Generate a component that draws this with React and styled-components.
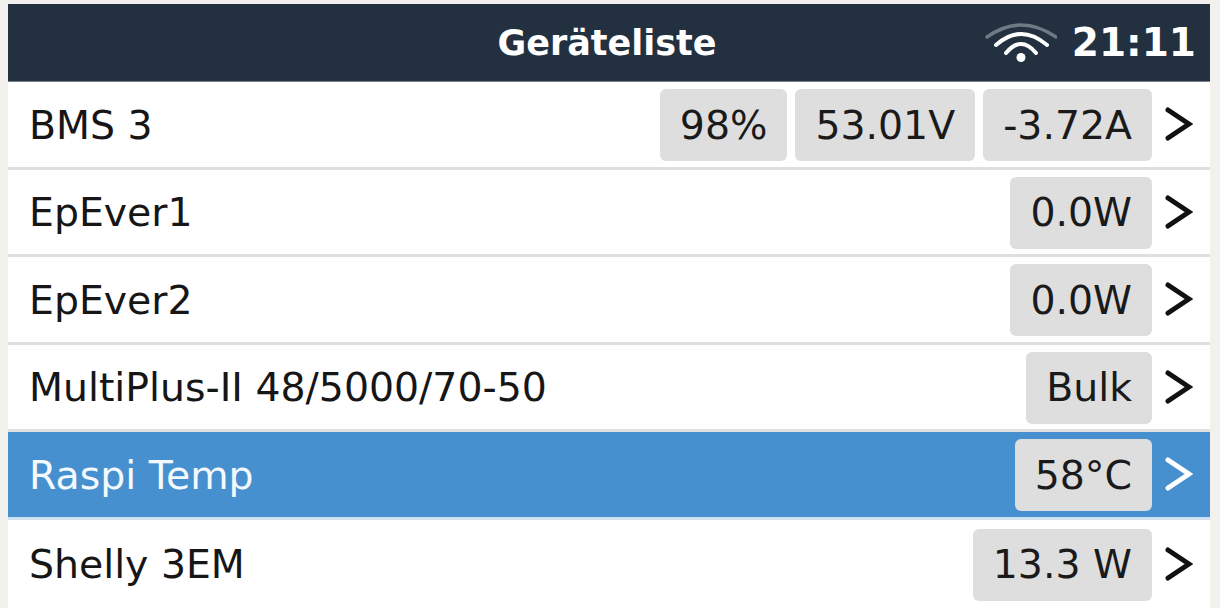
import React from 'react';
import styled, { createGlobalStyle } from 'styled-components';

const GlobalStyle = createGlobalStyle`
    html, body {
        margin: 0;
        padding: 0;
        background: #f3f1ed;
    }
`;

const Screen = styled.div`
    width: 1220px;
    height: 608px;
    box-sizing: border-box;
    padding: 4px 10px 0 8px;
    background: #f3f1ed;
    font-family: "DejaVu Sans", sans-serif;
    overflow: hidden;
`;

const Header = styled.header`
    height: 78px;
    box-sizing: border-box;
    background: #22303f;
    color: #fff;
    font-weight: 700;
    display: grid;
    grid-template-columns: 1fr auto 1fr;
    align-items: center;
    border-bottom: 1px solid #77808a;
`;

const Title = styled.div`
    grid-column: 2;
    font-size: 35px;
    margin-right: 4px;
`;

const Status = styled.div`
    grid-column: 3;
    justify-self: end;
    display: flex;
    align-items: center;
    gap: 15px;
    font-size: 39px;
    padding-right: 14px;
`;

const List = styled.div`
    background: #fff;
    height: 526px;
`;

const Row = styled.div`
    height: 87.6px;
    box-sizing: border-box;
    display: flex;
    align-items: center;
    padding: 1.5px 17px 0 21px;
    gap: 8px;
    background: ${(p) => (p.$active ? '#4790d0' : '#fff')};
    color: ${(p) => (p.$active ? '#f4f9fd' : '#161616')};
    border-bottom: 3px solid ${(p) => (p.$active ? '#cfe0ef' : '#dfdfdf')};
    &:last-child {
        border-bottom: none;
    }
`;

const Name = styled.span`
    flex: 1;
    font-size: 39.4px;
    padding-bottom: 1px;
`;

const Chip = styled.span`
    height: 72px;
    box-sizing: border-box;
    display: flex;
    align-items: center;
    padding: 0 20px 1px;
    border-radius: 6px;
    background: #dedede;
    color: #1a1a1a;
    font-size: 39.4px;
`;

const Chevron = styled.svg`
    width: 28px;
    height: 36px;
    margin-left: 5px;
    flex: none;
`;

const WifiIcon = () => (
    <svg width="72" height="44" viewBox="0 0 72 44" fill="none" strokeLinecap="round">
        <path d="M2 16Q36-8 71 16" stroke="#6f7983" strokeWidth="3.5" />
        <path d="M11 24Q36 2 62 24" stroke="#fff" strokeWidth="4" />
        <path d="M21 32Q36 14 51 32" stroke="#fff" strokeWidth="4" />
        <circle cx="36" cy="36.5" r="4.5" fill="#fff" />
    </svg>
);

const devices = [
    { name: 'BMS 3', values: ['98%', '53.01V', '-3.72A'] },
    { name: 'EpEver1', values: ['0.0W'] },
    { name: 'EpEver2', values: ['0.0W'] },
    { name: 'MultiPlus-II 48/5000/70-50', values: ['Bulk'] },
    { name: 'Raspi Temp', values: ['58°C'], active: true },
    { name: 'Shelly 3EM', values: ['13.3 W'] },
];

const App = () => (
    <>
        <GlobalStyle />
        <Screen>
            <Header>
                <Title>Geräteliste</Title>
                <Status>
                    <WifiIcon />
                    <span>21:11</span>
                </Status>
            </Header>
            <List>
                {devices.map((device) => (
                    <Row key={device.name} $active={device.active}>
                        <Name>{device.name}</Name>
                        {device.values.map((value) => (
                            <Chip key={value}>{value}</Chip>
                        ))}
                        <Chevron viewBox="0 0 28 36" fill="none">
                            <path
                                d="M3 3L24 17L3 31"
                                stroke={device.active ? '#fff' : '#111'}
                                strokeWidth="5"
                                strokeLinecap="round"
                                strokeLinejoin="miter"
                            />
                        </Chevron>
                    </Row>
                ))}
            </List>
        </Screen>
    </>
);

export default App;
